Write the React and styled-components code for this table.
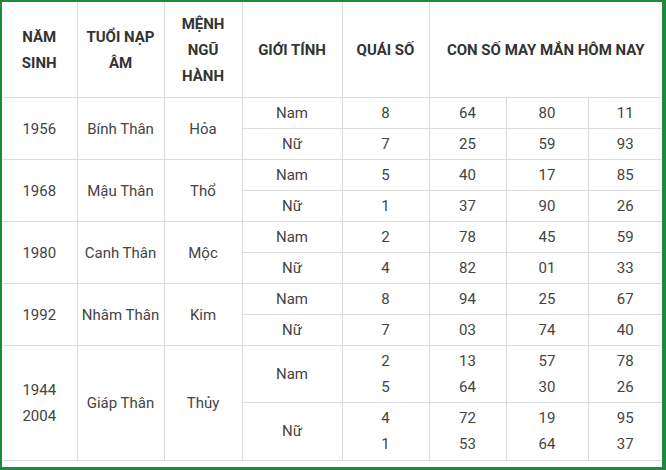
import React from "react";
import styled, { createGlobalStyle } from "styled-components";

const data = [
  {
    years: ["1956"],
    napAm: "Bính Thân",
    menh: "Hỏa",
    rows: [
      { sex: "Nam", quai: ["8"], nums: [["64"], ["80"], ["11"]] },
      { sex: "Nữ", quai: ["7"], nums: [["25"], ["59"], ["93"]] },
    ],
  },
  {
    years: ["1968"],
    napAm: "Mậu Thân",
    menh: "Thổ",
    rows: [
      { sex: "Nam", quai: ["5"], nums: [["40"], ["17"], ["85"]] },
      { sex: "Nữ", quai: ["1"], nums: [["37"], ["90"], ["26"]] },
    ],
  },
  {
    years: ["1980"],
    napAm: "Canh Thân",
    menh: "Mộc",
    rows: [
      { sex: "Nam", quai: ["2"], nums: [["78"], ["45"], ["59"]] },
      { sex: "Nữ", quai: ["4"], nums: [["82"], ["01"], ["33"]] },
    ],
  },
  {
    years: ["1992"],
    napAm: "Nhâm Thân",
    menh: "Kim",
    rows: [
      { sex: "Nam", quai: ["8"], nums: [["94"], ["25"], ["67"]] },
      { sex: "Nữ", quai: ["7"], nums: [["03"], ["74"], ["40"]] },
    ],
  },
  {
    years: ["1944", "2004"],
    napAm: "Giáp Thân",
    menh: "Thủy",
    tall: true,
    rows: [
      { sex: "Nam", quai: ["2", "5"], nums: [["13", "64"], ["57", "30"], ["78", "26"]] },
      { sex: "Nữ", quai: ["4", "1"], nums: [["72", "53"], ["19", "64"], ["95", "37"]] },
    ],
  },
];

const widths = [75, 87, 78, 100, 87, 77, 82, 74];

const Lines = ({ items }) =>
  items.map((t, i) => (
    <React.Fragment key={i}>
      {i > 0 && <br />}
      {t}
    </React.Fragment>
  ));

export default function App() {
  return (
    <>
      <GlobalStyle />
      <Frame>
        <TableWrap>
          <Table>
            <colgroup>
              {widths.map((w, i) => (
                <col key={i} style={{ width: w }} />
              ))}
            </colgroup>
            <thead>
              <tr>
                <Th>NĂM<br />SINH</Th>
                <Th>TUỔI NẠP<br />ÂM</Th>
                <Th>MỆNH<br />NGŨ<br />HÀNH</Th>
                <Th>GIỚI TÍNH</Th>
                <Th>QUÁI SỐ</Th>
                <Th colSpan={3}>CON SỐ MAY MẮN HÔM NAY</Th>
              </tr>
            </thead>
            <tbody>
              {data.map((g) =>
                g.rows.map((r, i) => (
                  <tr key={g.years[0] + r.sex}>
                    {i === 0 && (
                      <>
                        <Td rowSpan={2}>
                          <Lines items={g.years} />
                        </Td>
                        <Td rowSpan={2}>{g.napAm}</Td>
                        <Td rowSpan={2}>{g.menh}</Td>
                      </>
                    )}
                    <Td $tall={g.tall}>{r.sex}</Td>
                    <Td $tall={g.tall}>
                      <Lines items={r.quai} />
                    </Td>
                    {r.nums.map((n, k) => (
                      <Td key={k} $tall={g.tall}>
                        <Lines items={n} />
                      </Td>
                    ))}
                  </tr>
                ))
              )}
            </tbody>
          </Table>
        </TableWrap>
      </Frame>
    </>
  );
}

const GlobalStyle = createGlobalStyle`
  html, body {
    margin: 0;
    padding: 0;
    background: #fff;
  }
  body {
    font-family: Roboto, "Noto Sans", sans-serif;
  }
`;

const Frame = styled.div`
  width: 666px;
  height: 470px;
  box-sizing: border-box;
  border-style: solid;
  border-color: #218a3a;
  border-width: 2px 4px 3px 2px;
  background: #fff;
  overflow: hidden;
`;

const TableWrap = styled.div`
  border-bottom: 1px solid #dcdcdc;
`;

const Table = styled.table`
  width: 660px;
  table-layout: fixed;
  border-collapse: collapse;
  border-style: hidden;
`;

const Th = styled.th`
  height: 95px;
  padding: 0 4px;
  border: 1px solid #dcdcdc;
  font-size: 15px;
  font-weight: 700;
  line-height: 26px;
  color: #333;
  text-align: center;
  vertical-align: middle;
`;

const Td = styled.td`
  height: ${(p) => (p.$tall ? "57px" : "31px")};
  padding: 0 2px;
  border: 1px solid #dcdcdc;
  font-size: 15px;
  line-height: 26px;
  color: #444;
  text-align: center;
  vertical-align: middle;
  box-sizing: border-box;
`;
